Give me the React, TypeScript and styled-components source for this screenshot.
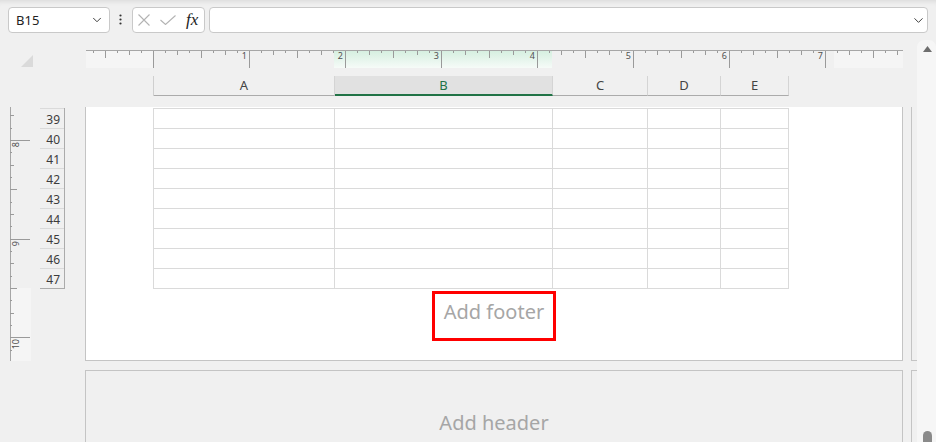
import styled, { createGlobalStyle } from "styled-components";
import { ChevronDown } from "lucide-react";

const GlobalStyle = createGlobalStyle`
  html, body { margin: 0; padding: 0; background: #f0f0f0; }
  body { font-family: "Noto Sans", "Open Sans", sans-serif; }
  * { box-sizing: border-box; }
`;

const columns = [
  { name: "A", width: 181 },
  { name: "B", width: 218, selected: true },
  { name: "C", width: 95 },
  { name: "D", width: 73 },
  { name: "E", width: 68 },
];

const rows = [39, 40, 41, 42, 43, 44, 45, 46, 47];

// horizontal ruler: zero at 67px, 96px per inch, tick every 1/8"
const hTicks = Array.from({ length: 68 }, (_, i) => i - 5);
// vertical ruler: inch 8 at 33px, ~98.6px per inch
const vTicks = Array.from({ length: 20 }, (_, i) => i - 2);

// the ruler svg starts a few px above the band so the digits keep their full text box
const H_PAD = 4;

function tickLength(k: number, full: number) {
  if (k % 8 === 0) return full;
  if (k % 4 === 0) return 7;
  if (k % 2 === 0) return 4;
  return 2;
}

export default function App() {
  return (
    <>
      <GlobalStyle />
      <Root>
        <FormulaBar>
          <NameBox>
            <span>B15</span>
            <ChevronDown size={14} strokeWidth={1.6} color="#333" />
          </NameBox>
          <MoreButton>
            <svg width="3" height="12" viewBox="0 0 3 12">
              <circle cx="1.5" cy="1.5" r="1.1" fill="#333" />
              <circle cx="1.5" cy="5.5" r="1.1" fill="#333" />
              <circle cx="1.5" cy="9.5" r="1.1" fill="#333" />
            </svg>
          </MoreButton>
          <FxGroup>
            <svg width="12" height="12" viewBox="0 0 12 12">
              <path d="M0.5 0.5 L11.5 11.5 M11.5 0.5 L0.5 11.5" stroke="#b3b3b3" strokeWidth="1.1" fill="none" />
            </svg>
            <svg width="16" height="10" viewBox="0 0 16 10">
              <polyline points="0.5,5 5.5,9.5 15.5,0.5" stroke="#b3b3b3" strokeWidth="1.1" fill="none" />
            </svg>
            <FxLabel>fx</FxLabel>
          </FxGroup>
          <FormulaInput>
            <ChevronDown size={15} strokeWidth={1.5} color="#333" />
          </FormulaInput>
        </FormulaBar>

        <Main>
          <Workspace>
            <RulerRow>
              <Corner>
                <svg width="12" height="12" viewBox="0 0 12 12">
                  <polygon points="12,0 12,12 0,12" fill="#dadada" />
                </svg>
              </Corner>
              <HRuler>
                <RulerZone $w={67} $kind="margin" />
                <RulerZone $w={181} $kind="content" />
                <RulerZone $w={218} $kind="selected" />
                <RulerZone $w={282} $kind="content" />
                <RulerZone $w={69} $kind="margin" />
                <RulerMarks width="817" height={17 + H_PAD}>
                  {hTicks.map((k) => {
                    const x = 67 + k * 12 + 0.5;
                    return (
                      <line
                        key={k}
                        x1={x}
                        x2={x}
                        y1={H_PAD}
                        y2={H_PAD + tickLength(k, 17)}
                        stroke="#9a9a9a"
                        strokeWidth="1"
                      />
                    );
                  })}
                  {hTicks
                    .filter((k) => k > 0 && k % 8 === 0)
                    .map((k) => (
                      <text key={k} x={67 + k * 12 - 2} y={H_PAD + 8} textAnchor="end" fontSize="9" fill="#505050">
                        {k / 8}
                      </text>
                    ))}
                </RulerMarks>
              </HRuler>
            </RulerRow>

            <HeaderStrip>
              {columns.map((c) => (
                <ColHeader key={c.name} $w={c.width} $selected={!!c.selected}>
                  {c.name}
                </ColHeader>
              ))}
            </HeaderStrip>

            <Body>
              <Gutter>
                <VRuler>
                  <VRulerZone $h={181} />
                  <VRulerZone $margin />
                  <VRulerMarks width="21" height="254">
                    {vTicks.map((k) => {
                      const y = Math.round(33 + k * 12.33) + 0.5;
                      return (
                        <line key={k} x1={0} x2={tickLength(k, 20)} y1={y} y2={y} stroke="#9a9a9a" strokeWidth="1" />
                      );
                    })}
                    {vTicks
                      .filter((k) => k % 8 === 0)
                      .map((k) => {
                        const y = Math.round(33 + k * 12.33) + 2;
                        return (
                          <text
                            key={k}
                            x={9}
                            y={y}
                            textAnchor="end"
                            fontSize="9"
                            fill="#505050"
                            transform={`rotate(-90 9 ${y})`}
                          >
                            {8 + k / 8}
                          </text>
                        );
                      })}
                  </VRulerMarks>
                </VRuler>
                <RowHeaders>
                  {rows.map((r) => (
                    <RowHeader key={r}>{r}</RowHeader>
                  ))}
                </RowHeaders>
              </Gutter>

              <PageColumn>
                <Page>
                  <Sheet>
                    {rows.map((r) =>
                      columns.map((c) => <Cell key={`${c.name}${r}`} />)
                    )}
                  </Sheet>
                  <FooterBox>Add footer</FooterBox>
                </Page>
                <NextPage>Add header</NextPage>
              </PageColumn>

              <SideColumn>
                <SidePage />
                <SideNext />
              </SideColumn>
            </Body>
          </Workspace>

          <Scrollbar>
            <svg width="9" height="6" viewBox="0 0 9 6">
              <polygon points="4.5,0 9,6 0,6" fill="#6e6e6e" />
            </svg>
            <Thumb />
          </Scrollbar>
        </Main>
      </Root>
    </>
  );
}

const Root = styled.div`
  width: 936px;
  height: 442px;
  overflow: hidden;
  background: #f0f0f0;
  display: flex;
  flex-direction: column;
  font-family: "Noto Sans", "Open Sans", sans-serif;
  color: #333;
`;

const FormulaBar = styled.div`
  height: 40px;
  flex: none;
  display: flex;
  align-items: flex-start;
  padding: 7px 8px 0 8px;
  box-shadow: inset 0 6px 6px -6px rgba(0, 0, 0, 0.14);
`;

const Field = styled.div`
  height: 26px;
  background: #fff;
  border: 1px solid #c9c9c9;
  border-radius: 4px;
  display: flex;
  align-items: center;
`;

const NameBox = styled(Field)`
  width: 102px;
  justify-content: space-between;
  padding: 0 5px 0 7px;
  font-size: 13px;
  color: #222;
`;

const MoreButton = styled.div`
  width: 22px;
  height: 26px;
  display: flex;
  align-items: center;
  justify-content: center;
  padding-right: 1px;
`;

const FxGroup = styled(Field)`
  width: 73px;
  padding-left: 5px;
  gap: 10px;
`;

const FxLabel = styled.span`
  font-family: "Liberation Serif", "DejaVu Serif", serif;
  font-style: italic;
  font-size: 17px;
  color: #222;
  line-height: 1;
  margin-top: -2px;
`;

const FormulaInput = styled(Field)`
  flex: 1;
  margin-left: 4px;
  justify-content: flex-end;
  padding-right: 1px;
`;

const Main = styled.div`
  flex: 1;
  display: flex;
  min-height: 0;
`;

const Workspace = styled.div`
  width: 917px;
  flex: none;
  display: flex;
  flex-direction: column;
  padding-top: 10px;
`;

const RulerRow = styled.div`
  height: 18px;
  display: flex;
`;

const Corner = styled.div`
  width: 86px;
  padding: 5px 0 0 21px;
  svg {
    display: block;
  }
`;

const HRuler = styled.div`
  position: relative;
  width: 817px;
  height: 18px;
  border-top: 1px solid #a6a6a6;
  display: flex;
`;

const zoneBackground = {
  margin: "#f5f5f5",
  content: "transparent",
  selected: "linear-gradient(#d6efe0, #f6fbf8)",
};

const RulerZone = styled.div<{ $w: number; $kind: keyof typeof zoneBackground }>`
  width: ${(p) => p.$w}px;
  height: 100%;
  background: ${(p) => zoneBackground[p.$kind]};
`;

const RulerMarks = styled.svg`
  position: absolute;
  left: 0;
  top: -${H_PAD}px;
  overflow: visible;
  font-family: "Noto Sans", sans-serif;
`;

const HeaderStrip = styled.div`
  margin: 8px 0 0 153px;
  height: 20px;
  display: flex;
  border-left: 1px solid #cfcfcf;
`;

const ColHeader = styled.div<{ $w: number; $selected: boolean }>`
  width: ${(p) => p.$w}px;
  height: 20px;
  border-right: 1px solid #d4d4d4;
  border-bottom: ${(p) => (p.$selected ? "2px solid #217346" : "1px solid #ababab")};
  background: ${(p) => (p.$selected ? "#e1e1e1" : "transparent")};
  color: ${(p) => (p.$selected ? "#217346" : "#444")};
  font-size: 13px;
  line-height: 19px;
  text-align: center;
`;

const Body = styled.div`
  flex: 1;
  margin-top: 11px;
  display: flex;
  min-height: 0;
`;

const Gutter = styled.div`
  width: 85px;
  flex: none;
  display: flex;
  align-items: flex-start;
  padding-left: 10px;
`;

const VRuler = styled.div`
  position: relative;
  width: 21px;
  height: 254px;
  border-left: 1px solid #a6a6a6;
  display: flex;
  flex-direction: column;
`;

const VRulerZone = styled.div<{ $h?: number; $margin?: boolean }>`
  height: ${(p) => (p.$h ? `${p.$h}px` : "auto")};
  flex: ${(p) => (p.$h ? "none" : "1")};
  background: ${(p) => (p.$margin ? "#f5f5f5" : "transparent")};
`;

const VRulerMarks = styled.svg`
  position: absolute;
  left: -1px;
  top: 0;
  overflow: visible;
  font-family: "Noto Sans", sans-serif;
`;

const RowHeaders = styled.div`
  margin: 1px 0 0 9px;
  width: 25px;
  border-right: 1px solid #ababab;
  border-bottom: 1px solid #ababab;
`;

const RowHeader = styled.div`
  height: 20px;
  border-top: 1px solid #dadada;
  padding: 2px 4px 0 0;
  font-size: 12px;
  line-height: 17px;
  text-align: right;
  color: #3c3c3c;
`;

const PageColumn = styled.div`
  width: 818px;
  flex: none;
  display: flex;
  flex-direction: column;
`;

const Page = styled.div`
  height: 254px;
  flex: none;
  background: #fff;
  border: 1px solid #c4c4c4;
  border-top: none;
  display: flex;
  flex-direction: column;
`;

const Sheet = styled.div`
  margin: 1px 0 0 67px;
  display: grid;
  grid-template-columns: ${columns.map((c) => `${c.width}px`).join(" ")};
  width: max-content;
  border-left: 1px solid #dadada;
  border-top: 1px solid #dadada;
`;

const Cell = styled.div`
  height: 20px;
  border-right: 1px solid #dadada;
  border-bottom: 1px solid #dadada;
`;

const FooterBox = styled.div`
  margin: 2px auto 0;
  width: 124px;
  height: 50px;
  border: 3px solid #ff0000;
  padding-top: 4px;
  font-size: 20px;
  line-height: 27px;
  color: #a6a6a6;
  text-align: center;
  white-space: nowrap;
`;

const NextPage = styled.div`
  flex: 1;
  margin-top: 9px;
  border: 1px solid #c4c4c4;
  border-bottom: none;
  padding-top: 38px;
  font-size: 20px;
  line-height: 27px;
  color: #a6a6a6;
  text-align: center;
`;

const SideColumn = styled.div`
  width: 6px;
  margin-left: 8px;
  display: flex;
  flex-direction: column;
`;

const SidePage = styled.div`
  height: 254px;
  flex: none;
  border-left: 1px solid #c4c4c4;
  border-bottom: 1px solid #c4c4c4;
`;

const SideNext = styled.div`
  flex: 1;
  margin-top: 9px;
  border-left: 1px solid #c4c4c4;
  border-top: 1px solid #c4c4c4;
`;

const Scrollbar = styled.div`
  width: 19px;
  flex: none;
  background: #f6f6f6;
  border-radius: 7px 7px 0 0;
  display: flex;
  flex-direction: column;
  align-items: center;
  justify-content: space-between;
  padding: 6px 0 0 1px;

  svg {
    display: block;
  }
`;

const Thumb = styled.div`
  width: 9px;
  height: 11px;
  background: #8a8a8a;
  border-radius: 4.5px 4.5px 0 0;
`;
